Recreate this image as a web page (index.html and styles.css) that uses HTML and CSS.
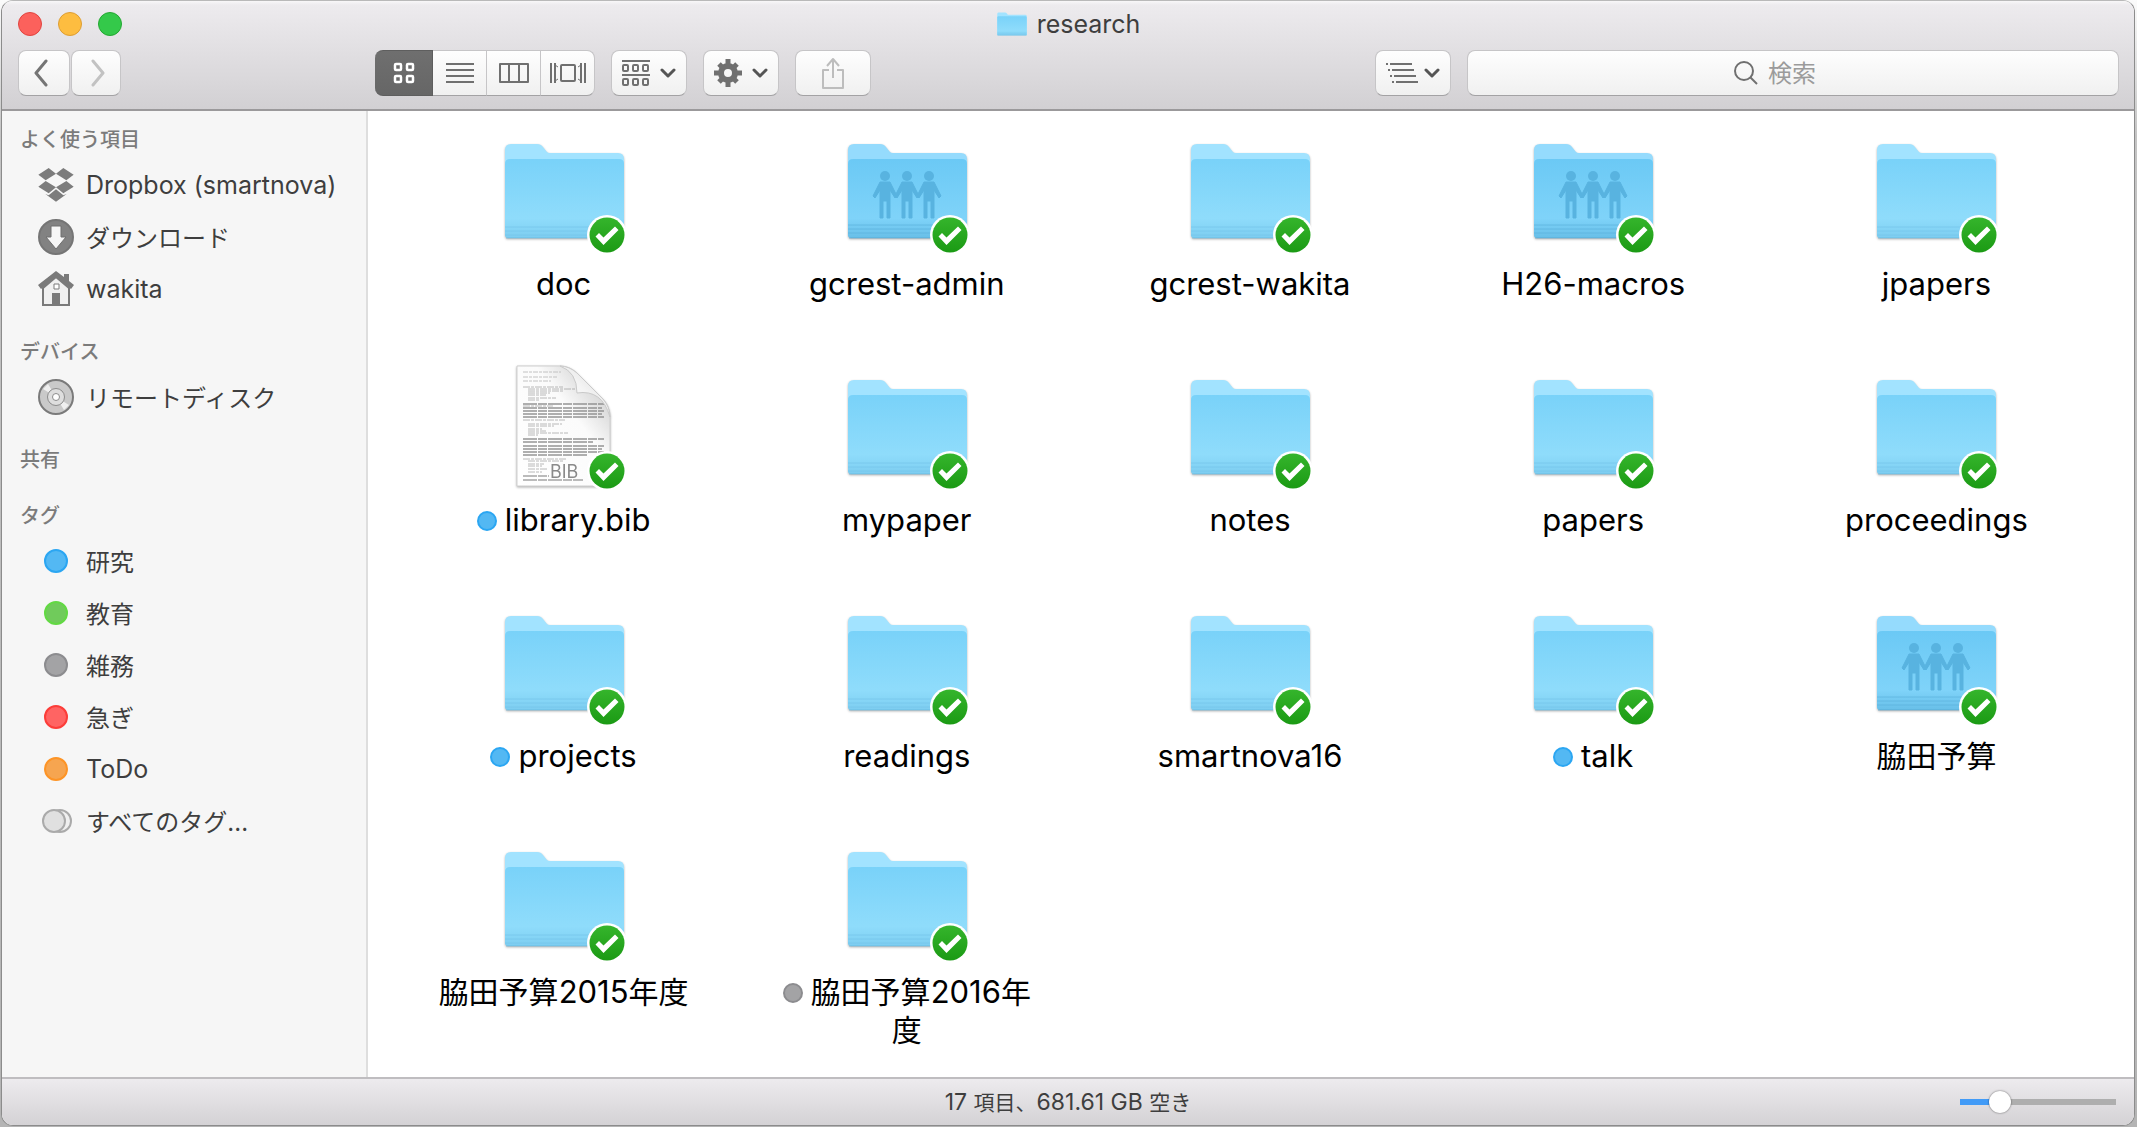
FILE: index.html
```html
<!DOCTYPE html>
<html lang="ja">
<head>
<meta charset="utf-8">
<title>research</title>
<link rel="stylesheet" href="styles.css">
</head>
<body>
<svg class="defs" aria-hidden="true">
  <defs>
    <linearGradient id="front" x1="0" y1="0" x2="0" y2="1">
      <stop offset="0" stop-color="#79d2f9"/>
      <stop offset=".75" stop-color="#8fdcfb"/>
      <stop offset=".86" stop-color="#87d6f7"/>
      <stop offset="1" stop-color="#7dcdf0"/>
    </linearGradient>
    <linearGradient id="front-shared" x1="0" y1="0" x2="0" y2="1">
      <stop offset="0" stop-color="#6bc9f5"/>
      <stop offset=".75" stop-color="#7fd3f9"/>
      <stop offset=".86" stop-color="#74caf2"/>
      <stop offset="1" stop-color="#68bfe8"/>
    </linearGradient>
    <linearGradient id="badge-green" x1="0" y1="0" x2="0" y2="1">
      <stop offset="0" stop-color="#35b52c"/>
      <stop offset="1" stop-color="#1b9a14"/>
    </linearGradient>
    <linearGradient id="curl" x1="0" y1="1" x2="1" y2="0">
      <stop offset="0" stop-color="#ffffff"/>
      <stop offset=".5" stop-color="#f4f4f4"/>
      <stop offset="1" stop-color="#d4d4d4"/>
    </linearGradient>
    <linearGradient id="sheet" x1="0" y1="1" x2="1" y2="0">
      <stop offset="0" stop-color="#ffffff"/>
      <stop offset=".6" stop-color="#fbfbfb"/>
      <stop offset=".8" stop-color="#dcdcdc"/>
    </linearGradient>
  </defs>
  <symbol id="folder" viewBox="0 0 128 128">
    <path d="M5 110V24q0-6 6-6h26q4 0 6 3l4 5q1 1 3 1h68q6 0 6 6v77z" fill="#a2e3ff"/>
    <path d="M5 109V38q0-5 5-5h109q5 0 5 5v71q0 3-3 3H8q-3 0-3-3z" fill="url(#front)"/>
    <path d="M5 101h119M5 105h119M5 109h119" stroke="#72c3e8" stroke-opacity=".6" fill="none"/>
    <path d="M6 112h117" stroke="#5fb2d8" stroke-opacity=".6"/>
  </symbol>
  <symbol id="folder-shared" viewBox="0 0 128 128">
    <path d="M5 110V24q0-6 6-6h26q4 0 6 3l4 5q1 1 3 1h68q6 0 6 6v77z" fill="#95dbfd"/>
    <path d="M5 109V38q0-5 5-5h109q5 0 5 5v71q0 3-3 3H8q-3 0-3-3z" fill="url(#front-shared)"/>
    <path d="M5 99h119M5 103h119M5 107h119" stroke="#56aed8" stroke-opacity=".6" fill="none"/>
    <path d="M6 112h117" stroke="#4d9fc9" stroke-opacity=".6"/>
    <use href="#person" x="-22"/>
    <use href="#person"/>
    <use href="#person" x="22"/>
  </symbol>
  <g id="person" fill="#58b3e0">
    <circle cx="64" cy="50" r="5"/>
    <path d="M59 56h10l7 14-2 2-5-8v28h-3V75h-4v17h-3V64l-5 8-2-2z" stroke="#58b3e0"/>
  </g>
  <symbol id="badge" viewBox="0 0 40 40">
    <circle cx="20" cy="20" r="20" fill="#fff"/>
    <circle cx="20" cy="20" r="17.500" fill="url(#badge-green)"/>
    <path d="M8.500 21.500l3.500-3.500 4.500 4.500L28 11.500l3.500 3.500-15 15z" fill="#fff"/>
  </symbol>
  <symbol id="dropbox" viewBox="114 171 108 108">
    <path d="M115 194l31-20 22 17-31 20zM190 174l31 20-22 17-31-20zM115 230l22-17 31 19-22 18zM221 230l-22-17-31 19 22 18zM136 252l10 4 22-18 22 18 10-4-32 23z" fill="#7c7c7c"/>
  </symbol>
  <symbol id="chevron" viewBox="0 0 16 10">
    <path d="M2 2l6 6 6-6" fill="none" stroke="#555" stroke-width="3" stroke-linecap="round" stroke-linejoin="round"/>
  </symbol>
</svg>

<div class="window">
  <header class="header">
    <div class="titlebar">
      <div class="lights">
        <button class="light close" aria-label="閉じる"></button>
        <button class="light minimize" aria-label="しまう"></button>
        <button class="light expand" aria-label="拡大"></button>
      </div>
      <h1 class="title">
        <svg class="title-icon" viewBox="4 16 121 98" preserveAspectRatio="none" aria-hidden="true"><use href="#folder" width="128" height="128"/></svg>
        research
      </h1>
    </div>
    <div class="toolbar">
      <div class="nav">
        <button class="btn back" aria-label="戻る">
          <svg width="16" height="28" viewBox="0 0 16 28"><path d="M13 2L3 14l10 12" fill="none" stroke="#757575" stroke-width="3" stroke-linecap="round" stroke-linejoin="round"/></svg>
        </button>
        <button class="btn forward" aria-label="進む">
          <svg width="16" height="28" viewBox="0 0 16 28"><path d="M3 2l10 12L3 26" fill="none" stroke="#c2c2c2" stroke-width="3" stroke-linecap="round" stroke-linejoin="round"/></svg>
        </button>
      </div>
      <div class="segments">
        <button class="segment active" aria-label="アイコン">
          <svg width="22" height="22" viewBox="0 0 22 22" fill="none" stroke="#fff" stroke-width="2.500"><rect x="2" y="2" width="6" height="6" rx="1"/><rect x="14" y="2" width="6" height="6" rx="1"/><rect x="2" y="14" width="6" height="6" rx="1"/><rect x="14" y="14" width="6" height="6" rx="1"/></svg>
        </button>
        <button class="segment" aria-label="リスト">
          <svg width="28" height="22" viewBox="0 0 28 22"><path d="M0 2h28M0 8h28M0 14h28M0 20h28" stroke="#707070" stroke-width="2"/></svg>
        </button>
        <button class="segment" aria-label="カラム">
          <svg width="32" height="22" viewBox="0 0 32 22"><path d="M2 2h28v18H2zM11 2v18M21 2v18" fill="none" stroke="#707070" stroke-width="2" stroke-linejoin="round"/></svg>
        </button>
        <button class="segment" aria-label="カバーフロー">
          <svg width="36" height="22" viewBox="0 0 36 22"><path d="M1 1v20M35 1v20M5 1v20M31 1v20" stroke="#707070" stroke-width="2"/><path d="M5 3l3 2M5 19l3-2M31 3l-3 2M31 19l-3-2" stroke="#707070"/><rect x="11" y="3" width="14" height="16" rx="1" fill="none" stroke="#707070" stroke-width="2"/></svg>
        </button>
      </div>
      <button class="btn menu" aria-label="グループ">
        <svg width="28" height="28" viewBox="0 0 28 28" fill="none" stroke="#707070" stroke-width="2"><path d="M0 2h28M0 16h28"/><rect x="1" y="6" width="5" height="6" rx="1"/><rect x="11" y="6" width="5" height="6" rx="1"/><rect x="21" y="6" width="5" height="6" rx="1"/><rect x="1" y="20" width="5" height="6" rx="1"/><rect x="11" y="20" width="5" height="6" rx="1"/><rect x="21" y="20" width="5" height="6" rx="1"/></svg>
        <svg width="16" height="10"><use href="#chevron"/></svg>
      </button>
      <button class="btn menu" aria-label="アクション">
        <svg width="28" height="28" viewBox="-14 -14 28 28"><circle r="7" fill="none" stroke="#707070" stroke-width="6"/><path d="M0-14V-8M0 14V8M-14 0H-8M14 0H8M-9-9l4 4M9 9l-4-4M9-9L5-5M-9 9l4-4" stroke="#707070" stroke-width="5"/></svg>
        <svg width="16" height="10"><use href="#chevron"/></svg>
      </button>
      <button class="btn menu" aria-label="共有">
        <svg width="24" height="32" viewBox="0 0 24 32"><path d="M8 13H2v18h20V13h-6M12 21V2M6 9l6-7 6 7" fill="none" stroke="#bdbdbd" stroke-width="2" stroke-linejoin="round"/></svg>
      </button>
      <button class="btn menu arrange" aria-label="表示順序">
        <svg width="32" height="22" viewBox="0 0 32 22"><path d="M0 2h2M4 2h22M2 8h2M6 8h22M4 14h2M8 14h22M6 20h2M10 20h22" stroke="#707070" stroke-width="2"/></svg>
        <svg width="16" height="10"><use href="#chevron"/></svg>
      </button>
      <label class="btn search">
        <svg width="24" height="24" viewBox="0 0 24 24" aria-hidden="true"><circle cx="10" cy="10" r="9" fill="none" stroke="#707070" stroke-width="2"/><path d="M16 16l7 7" stroke="#707070" stroke-width="2"/></svg>
        <input class="search-input" type="search" placeholder="検索" aria-label="検索">
      </label>
    </div>
  </header>

  <div class="body">
    <nav class="sidebar">
      <section class="group">
        <h2 class="group-title">よく使う項目</h2>
        <a class="place" href="#"><svg class="place-icon"><use href="#dropbox"/></svg>Dropbox (smartnova)</a>
        <a class="place" href="#"><svg class="place-icon" viewBox="0 0 36 36"><circle cx="18" cy="18" r="17" fill="#828282" stroke="#757575" stroke-width="2"/><path d="M13 7h10v11h5L18 30 8 18h5z" fill="#f6f6f6" stroke="#6f6f6f"/></svg><span class="cjk">ダウンロード</span></a>
        <a class="place" href="#"><svg class="place-icon" viewBox="0 0 36 36"><path d="M5 17v17h26V17L18 6z" fill="#f0f0f0" stroke="#7a7a7a" stroke-width="2"/><path d="M0 14L18 0l8 6V3h5v7l5 4-3 4L18 6 3 18z" fill="#7a7a7a"/><path d="M14 22h8v12h-8z" fill="#7a7a7a"/><path d="M16 13h5v5h-5z" fill="#fff" stroke="#7a7a7a"/></svg>wakita</a>
      </section>
      <section class="group">
        <h2 class="group-title">デバイス</h2>
        <a class="place" href="#"><svg class="place-icon" viewBox="0 0 36 36"><circle cx="18" cy="18" r="17" fill="#c9c9c9" stroke="#7a7a7a" stroke-width="2"/><path d="M18 18L5 10l5-5zM18 18l13 8-5 5z" fill="#efefef"/><circle cx="18" cy="18" r="8.500" fill="#dedede" stroke="#8c8c8c"/><circle cx="18" cy="18" r="3.500" fill="#fff" stroke="#8c8c8c"/></svg><span class="cjk">リモートディスク</span></a>
      </section>
      <section class="group">
        <h2 class="group-title">共有</h2>
      </section>
      <section class="group">
        <h2 class="group-title">タグ</h2>
        <a class="place" href="#"><span class="place-icon"><i class="dot blue"></i></span><span class="cjk">研究</span></a>
        <a class="place" href="#"><span class="place-icon"><i class="dot green"></i></span><span class="cjk">教育</span></a>
        <a class="place" href="#"><span class="place-icon"><i class="dot gray"></i></span><span class="cjk">雑務</span></a>
        <a class="place" href="#"><span class="place-icon"><i class="dot red"></i></span><span class="cjk">急ぎ</span></a>
        <a class="place" href="#"><span class="place-icon"><i class="dot orange"></i></span>ToDo</a>
        <a class="place" href="#"><svg class="place-icon" viewBox="0 0 36 36"><circle cx="22" cy="18" r="11" fill="#efefef" stroke="#aaa" stroke-width="2"/><circle cx="16" cy="18" r="11" fill="#e0e0e0" stroke="#aaa" stroke-width="2"/></svg><span class="cjk">すべてのタグ...</span></a>
      </section>
    </nav>

    <main class="files">
      <a class="file" href="#"><span class="icon"><svg class="art"><use href="#folder"/></svg><svg class="badge"><use href="#badge"/></svg></span><span class="name">doc</span></a>
      <a class="file" href="#"><span class="icon"><svg class="art"><use href="#folder-shared"/></svg><svg class="badge"><use href="#badge"/></svg></span><span class="name">gcrest-admin</span></a>
      <a class="file" href="#"><span class="icon"><svg class="art"><use href="#folder"/></svg><svg class="badge"><use href="#badge"/></svg></span><span class="name">gcrest-wakita</span></a>
      <a class="file" href="#"><span class="icon"><svg class="art"><use href="#folder-shared"/></svg><svg class="badge"><use href="#badge"/></svg></span><span class="name">H26-macros</span></a>
      <a class="file" href="#"><span class="icon"><svg class="art"><use href="#folder"/></svg><svg class="badge"><use href="#badge"/></svg></span><span class="name">jpapers</span></a>

      <a class="file" href="#"><span class="icon"><svg class="art" viewBox="0 0 128 128">
        <path d="M17 4h43q9 0 17 7l26 26q7 8 7 18v69H17z" fill="url(#sheet)" stroke="#cfcfcf"/>
        <g fill="none" stroke="#8d8d8d">
          <path d="M23 10h38M23 15h34M23 19h28" stroke="#c2c2c2" stroke-dasharray="5 1 3 1"/>
          <path d="M23 25h40M28 27h48M28 29h36M28 31h22M28 33h18M28 36h28M28 38h12" stroke-opacity=".6" stroke-dasharray="7 1 3 1"/>
          <path d="M23 42h81M23 46h79M23 49h81M23 52h79M23 55h81" stroke-width="2" stroke-opacity=".7" stroke-dasharray="14 1 9 1"/>
          <path d="M23 44h30M23 58h42M28 62h34M28 64h26M28 67h14M28 69h18M28 71h40M28 73h10" stroke-opacity=".6" stroke-dasharray="7 1 3 1"/>
          <path d="M23 77h81M23 80h70M23 84h81M23 87h79M23 90h81M23 93h64" stroke-width="2" stroke-opacity=".7" stroke-dasharray="14 1 9 1"/>
          <path d="M23 97h44M28 99h36M28 102h16M28 104h14M28 107h20M28 110h14" stroke-opacity=".6" stroke-dasharray="7 1 3 1"/>
          <path d="M23 114h26M23 118h60" stroke-width="2" stroke-opacity=".6" stroke-dasharray="14 1 9 1"/>
        </g>
        <path d="M60 4q17 6 17 27 25-4 33 24 0-10-7-18L77 11q-8-7-17-7z" fill="url(#curl)" stroke="#c9c9c9"/>
        <text class="kind" x="50" y="116">BIB</text>
      </svg><svg class="badge"><use href="#badge"/></svg></span><span class="name"><i class="tag blue"></i>library.bib</span></a>
      <a class="file" href="#"><span class="icon"><svg class="art"><use href="#folder"/></svg><svg class="badge"><use href="#badge"/></svg></span><span class="name">mypaper</span></a>
      <a class="file" href="#"><span class="icon"><svg class="art"><use href="#folder"/></svg><svg class="badge"><use href="#badge"/></svg></span><span class="name">notes</span></a>
      <a class="file" href="#"><span class="icon"><svg class="art"><use href="#folder"/></svg><svg class="badge"><use href="#badge"/></svg></span><span class="name">papers</span></a>
      <a class="file" href="#"><span class="icon"><svg class="art"><use href="#folder"/></svg><svg class="badge"><use href="#badge"/></svg></span><span class="name">proceedings</span></a>

      <a class="file" href="#"><span class="icon"><svg class="art"><use href="#folder"/></svg><svg class="badge"><use href="#badge"/></svg></span><span class="name"><i class="tag blue"></i>projects</span></a>
      <a class="file" href="#"><span class="icon"><svg class="art"><use href="#folder"/></svg><svg class="badge"><use href="#badge"/></svg></span><span class="name">readings</span></a>
      <a class="file" href="#"><span class="icon"><svg class="art"><use href="#folder"/></svg><svg class="badge"><use href="#badge"/></svg></span><span class="name">smartnova16</span></a>
      <a class="file" href="#"><span class="icon"><svg class="art"><use href="#folder"/></svg><svg class="badge"><use href="#badge"/></svg></span><span class="name"><i class="tag blue"></i>talk</span></a>
      <a class="file" href="#"><span class="icon"><svg class="art"><use href="#folder-shared"/></svg><svg class="badge"><use href="#badge"/></svg></span><span class="name"><span class="cjk">脇田予算</span></span></a>

      <a class="file" href="#"><span class="icon"><svg class="art"><use href="#folder"/></svg><svg class="badge"><use href="#badge"/></svg></span><span class="name"><span class="cjk">脇田予算</span>2015<span class="cjk">年度</span></span></a>
      <a class="file" href="#"><span class="icon"><svg class="art"><use href="#folder"/></svg><svg class="badge"><use href="#badge"/></svg></span><span class="name"><i class="tag gray"></i><span class="cjk">脇田予算</span>2016<span class="cjk">年</span><span class="cjk">度</span></span></a>
    </main>
  </div>

  <footer class="status">
    <p class="status-text">17 <span class="cjk">項目、</span>681.61 GB <span class="cjk">空き</span></p>
    <input class="zoom" type="range" min="0" max="100" value="22" aria-label="アイコンサイズ">
  </footer>
</div>
</body>
</html>
```
FILE: styles.css
```css
* { box-sizing: border-box; }

body {
  margin: 0;
  min-height: 100vh;
  display: flex;
  flex-direction: column;
  background: linear-gradient(#fbfbfb, #c4c4c4 12%, #b4b4b4);
  font-family: Inter, "Noto Sans CJK JP", sans-serif;
  font-size: 24px;
  color: #3e3e3e;
}

button, input { font: inherit; color: inherit; margin: 0; }
button { border: 0; padding: 0; }
a { color: inherit; text-decoration: none; }
h1, h2, p { margin: 0; font-weight: 400; }

.defs { position: absolute; width: 0; height: 0; }

.window {
  flex: 1;
  display: flex;
  flex-direction: column;
  margin: 0 2px 1px 1px;
  border: 1px solid #8c8c8c;
  border-top-color: #b9b9b9;
  border-radius: 12px;
  overflow: hidden;
  background: #fff;
}

/* header */
.header {
  display: flex;
  flex-direction: column;
  gap: 3px;
  padding: 0 15px 13px 16px;
  border-bottom: 2px solid #9b999b;
  background: linear-gradient(#f8f7f8, #edebee 4px, #d2d0d3);
}

.titlebar {
  display: grid;
  grid-template-columns: 1fr auto 1fr;
  align-items: center;
  height: 46px;
}

.lights { display: flex; gap: 16px; }
.light { width: 24px; height: 24px; border: 1px solid; border-radius: 50%; }
.close { background: #fc615c; border-color: #e0443f; }
.minimize { background: #fdbd40; border-color: #dd9d33; }
.expand { background: #34c94a; border-color: #24a732; }

.title {
  display: flex;
  align-items: center;
  gap: 10px;
  font-size: 25px;
  line-height: 32px;
}
.title-icon { width: 30px; height: 24px; }

.toolbar { display: flex; gap: 16px; height: 46px; }

.btn {
  display: flex;
  align-items: center;
  justify-content: center;
  border: 1px solid #c6c5c7;
  border-bottom-color: #a3a2a4;
  border-radius: 8px;
  background: linear-gradient(#fefefe, #f0f0f0);
}

.nav { display: flex; gap: 1px; width: 341px; }
.back { width: 52px; padding-right: 6px; }
.forward { width: 50px; padding-left: 4px; }

.segments { display: flex; }
.segment {
  display: flex;
  align-items: center;
  justify-content: center;
  width: 54px;
  border: 1px solid #c6c5c7;
  border-width: 1px 1px 1px 0;
  border-bottom-color: #a3a2a4;
  background: linear-gradient(#fefefe, #f0f0f0);
}
.segment:last-child { border-radius: 0 8px 8px 0; }
.segment.active {
  width: 58px;
  border-color: #5e5e5e;
  border-radius: 8px 0 0 8px;
  background: linear-gradient(#6f6f6f, #666);
}

.menu { gap: 10px; width: 76px; }
.arrange { gap: 6px; margin-left: auto; }

.search { flex: 0 1 652px; gap: 10px; }
.search-input {
  width: 84px;
  padding: 0;
  border: 0;
  outline: 0;
  background: none;
  -webkit-appearance: none;
  appearance: none;
}
.search-input::placeholder { color: #9b9b9b; opacity: 1; }

/* body */
.body { flex: 1; display: flex; }

.sidebar {
  display: flex;
  flex-direction: column;
  gap: 16px;
  flex: 0 0 366px;
  padding-top: 8px;
  border-right: 2px solid #dedede;
  background: #f6f6f6;
}

.group-title {
  padding: 2px 0 0 18px;
  font-size: 20px;
  font-weight: 500;
  line-height: 38px;
  color: #7b7b7b;
}

.place {
  display: flex;
  align-items: center;
  gap: 12px;
  height: 52px;
  padding-left: 36px;
  font-size: 25px;
  white-space: nowrap;
}
.place .cjk { padding-bottom: 2px; font-size: 24px; }
.place-icon {
  display: flex;
  align-items: center;
  justify-content: center;
  width: 36px;
  height: 36px;
}
.dot, .tag { border-width: 2px; border-style: solid; border-radius: 50%; }
.dot { width: 24px; height: 24px; }

.blue { background: #53b8f3; border-color: #2ba6f2; }
.green { background: #70cb5b; border-color: #62d943; }
.gray { background: #a3a3a5; border-color: #8c8c8f; }
.red { background: #ff6463; border-color: #fc3d39; }
.orange { background: #f6a550; border-color: #fd9426; }

.files {
  flex: 1;
  display: grid;
  grid-template-columns: repeat(5, 1fr);
  grid-auto-rows: 177px;
  row-gap: 59px;
  align-content: start;
  padding: 15px 26px 0 24px;
}

.file {
  display: flex;
  flex-direction: column;
  align-items: center;
  gap: 11px;
  color: #000;
}
.icon { position: relative; width: 128px; height: 128px; }
.art {
  display: block;
  width: 128px;
  height: 128px;
  filter: drop-shadow(0 1px 1px rgba(0, 0, 0, .3));
}
.badge { position: absolute; right: 1px; bottom: -1px; width: 40px; height: 40px; }
.kind { font-size: 18px; fill: #8a8a8a; }

.name {
  width: 264px;
  font-size: 31px;
  line-height: 38px;
  text-align: center;
}
.name .cjk { font-size: 30px; line-height: 1; }
.tag {
  display: inline-block;
  width: 20px;
  height: 20px;
  margin-right: 8px;
}

/* status bar */
.status {
  display: grid;
  grid-template-columns: 1fr auto 1fr;
  align-items: center;
  height: 48px;
  padding: 0 18px;
  border-top: 2px solid #bfbdc0;
  background: linear-gradient(#edebee, #d4d2d5);
}
.status-text { grid-column: 2; font-size: 23px; line-height: 32px; }
.status-text .cjk { font-size: 21px; }

.zoom {
  -webkit-appearance: none;
  appearance: none;
  justify-self: end;
  width: 156px;
  height: 24px;
  background: linear-gradient(90deg, #429bf7 26%, #aeaeae 26%) center / 100% 6px no-repeat;
  border-radius: 3px;
}
.zoom::-webkit-slider-thumb {
  -webkit-appearance: none;
  width: 22px;
  height: 22px;
  border-radius: 50%;
  background: #fff;
  box-shadow: 0 0 2px rgba(0, 0, 0, .6);
}
```
